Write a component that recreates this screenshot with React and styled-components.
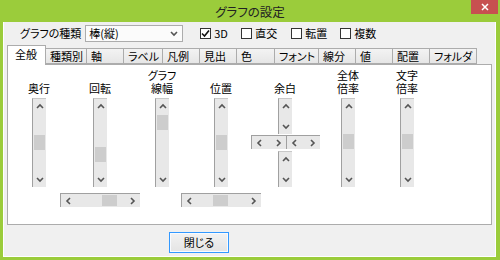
import React from 'react';
import styled, { createGlobalStyle } from 'styled-components';

const GlobalStyle = createGlobalStyle`
  html, body {
    margin: 0;
    padding: 0;
    background: #9bcc3b;
  }
  body {
    font-family: "Noto Sans CJK JP", "Noto Sans", sans-serif;
    font-size: 11px;
    color: #000;
    font-feature-settings: "palt";
  }
`;

const Window = styled.div`
  width: 500px;
  height: 260px;
  background: #9bcc3b;
  display: flex;
  flex-direction: column;
`;

const TitleBar = styled.div`
  height: 22px;
  flex: none;
  display: grid;
  grid-template-columns: 1fr auto 1fr;
`;

const Title = styled.div`
  grid-column: 2;
  font-size: 12.5px;
  line-height: 24px;
  color: #222;
`;

const CloseButton = styled.div`
  grid-column: 3;
  justify-self: end;
  align-self: start;
  width: 27px;
  height: 14px;
  margin-right: 2px;
  background: #c75050;
  display: flex;
  align-items: center;
  justify-content: center;
`;

const Client = styled.div`
  flex: 1;
  margin: 0 4px 3px 3px;
  background: #f0f0f0;
  border: 1px solid #fff;
  border-top: none;
  display: flex;
  flex-direction: column;
`;

const Toolbar = styled.div`
  height: 22px;
  display: flex;
  align-items: center;
  padding-left: 16px;
`;

const Label = styled.span`
  line-height: 13px;
  white-space: nowrap;
`;

const Select = styled.div`
  width: 98px;
  height: 17px;
  box-sizing: border-box;
  margin-left: 4px;
  margin-right: 17px;
  border: 1px solid #acacac;
  background: #fbfbfb;
  display: flex;
  align-items: center;
  justify-content: space-between;
  padding: 0 4px 0 3px;
`;

const Check = styled.label`
  width: ${p => (p.w ? p.w + 'px' : 'auto')};
  display: flex;
  align-items: center;
  gap: 3px;
`;

const Box = styled.span`
  width: 11px;
  height: 11px;
  box-sizing: border-box;
  border: 1px solid #333;
  background: #fff;
  display: flex;
  align-items: center;
  justify-content: center;
`;

const TabStrip = styled.div`
  height: 19px;
  margin: 1px 3px 0;
  display: flex;
  align-items: flex-end;
`;

const Tab = styled.div`
  width: ${p => p.w}px;
  height: ${p => (p.active ? 20 : 16)}px;
  margin-bottom: ${p => (p.active ? -1 : 0)}px;
  margin-left: -1px;
  box-sizing: border-box;
  border: 1px solid #acacac;
  border-bottom: ${p => (p.active ? 'none' : '1px solid #acacac')};
  background: ${p => (p.active ? '#fff' : 'linear-gradient(#f3f3f3, #e6e6e6)')};
  padding-left: ${p => (p.active ? 7 : 4)}px;
  line-height: ${p => (p.active ? 17 : 15)}px;
  white-space: nowrap;
  position: relative;
  z-index: ${p => (p.active ? 1 : 0)};
  &:first-child {
    margin-left: 0;
  }
`;

const Panel = styled.div`
  height: 161px;
  box-sizing: border-box;
  margin: 0 3px;
  border: 1px solid #acacac;
  background: #fff;
  display: grid;
  grid-template-columns: 62px 60px 64px 54px 74px 52px 66px;
  align-items: start;
  padding-top: 4px;
`;

const Column = styled.div`
  display: flex;
  flex-direction: column;
  align-items: center;
`;

const Caption = styled.div`
  height: 26px;
  margin-bottom: 3px;
  display: flex;
  flex-direction: column;
  justify-content: flex-end;
  align-items: center;
  line-height: 13px;
  white-space: nowrap;
`;

const VBar = styled.div`
  width: 14px;
  height: ${p => p.h}px;
  box-sizing: border-box;
  border-left: 1px solid #a0a0a0;
  border-top: 1px solid #c8c8c8;
  background: #e8e8e8;
  display: flex;
  flex-direction: column;
`;

const HBar = styled.div`
  width: ${p => p.w}px;
  height: 14px;
  box-sizing: border-box;
  border-left: 1px solid #a0a0a0;
  border-top: 1px solid #a0a0a0;
  background: #e8e8e8;
  display: flex;
  margin-top: ${p => p.mt || 0}px;
`;

const Arrow = styled.div`
  flex: none;
  ${p => (p.horizontal ? 'width: 15px;' : 'height: 15px;')}
  display: flex;
  align-items: center;
  justify-content: center;
`;

const Trough = styled.div`
  flex: 1;
  display: flex;
  flex-direction: ${p => (p.horizontal ? 'row' : 'column')};
`;

const Thumb = styled.div`
  flex: none;
  background: #cdcdcd;
  ${p =>
    p.horizontal
      ? 'width: 15px; margin: 1px 0 1px;'
      : 'height: 15px; margin: 0 1px 0 1px;'}
`;

const CrossRow = styled.div`
  display: flex;
  margin: 1px 0 2px;
`;

const Footer = styled.div`
  flex: 1;
  padding: 7px 0 0 165px;
`;

const Button = styled.div`
  width: 60px;
  height: 21px;
  box-sizing: border-box;
  border: 1px solid #3399ff;
  background: linear-gradient(#f2f2f2, #e4e4e4);
  box-shadow: inset 0 0 0 1px #f8fbff;
  display: flex;
  align-items: center;
  justify-content: center;
  line-height: 13px;
`;

const Chevron = ({ dir }) => {
  const pts = {
    up: '1,5 4,2 7,5',
    down: '1,2 4,5 7,2',
    left: '5,1 2,4 5,7',
    right: '2,1 5,4 2,7',
  }[dir];
  const vertical = dir === 'up' || dir === 'down';
  return (
    <svg width={vertical ? 8 : 7} height={vertical ? 7 : 8} viewBox={vertical ? '0 0 8 7' : '0 0 7 8'}>
      <polyline points={pts} fill="none" stroke="#555" strokeWidth="1.6" />
    </svg>
  );
};

const VScroll = ({ h = 89, thumb }) => (
  <VBar h={h}>
    <Arrow><Chevron dir="up" /></Arrow>
    <Trough>{thumb != null && <Thumb style={{ marginTop: thumb }} />}</Trough>
    <Arrow><Chevron dir="down" /></Arrow>
  </VBar>
);

const HScroll = ({ w = 80, thumb, mt }) => (
  <HBar w={w} mt={mt}>
    <Arrow horizontal><Chevron dir="left" /></Arrow>
    <Trough horizontal>{thumb != null && <Thumb horizontal style={{ marginLeft: thumb }} />}</Trough>
    <Arrow horizontal><Chevron dir="right" /></Arrow>
  </HBar>
);

const tabs = [
  ['全般', 39],
  ['種類別', 42],
  ['軸', 38],
  ['ラベル', 40],
  ['凡例', 38],
  ['見出', 38],
  ['色', 39],
  ['フォント', 45],
  ['線分', 38],
  ['値', 38],
  ['配置', 38],
  ['フォルダ', 48],
];

const controls = [
  { lines: ['奥行'], thumb: 21 },
  { lines: ['回転'], thumb: 33, h: 26 },
  { lines: ['グラフ', '線幅'], thumb: 1 },
  { lines: ['位置'], thumb: 21, h: 16 },
  { lines: ['余白'], cross: true },
  { lines: ['全体', '倍率'], thumb: 20 },
  { lines: ['文字', '倍率'], thumb: 20 },
];

const CheckBox = ({ label, checked, w }) => (
  <Check w={w}>
    <Box>
      {checked && (
        <svg width="9" height="9" viewBox="0 0 9 9">
          <polyline points="1,4.5 3.5,7 8,1.5" fill="none" stroke="#111" strokeWidth="1.6" />
        </svg>
      )}
    </Box>
    <Label>{label}</Label>
  </Check>
);

export default function App() {
  return (
    <>
      <GlobalStyle />
      <Window>
        <TitleBar>
          <Title>グラフの設定</Title>
          <CloseButton>
            <svg width="8" height="8" viewBox="0 0 8 8">
              <path d="M1 1L7 7M7 1L1 7" stroke="#fff" strokeWidth="1.5" />
            </svg>
          </CloseButton>
        </TitleBar>
        <Client>
          <Toolbar>
            <Label>グラフの種類</Label>
            <Select>
              <Label>棒(縦)</Label>
              <Chevron dir="down" />
            </Select>
            <CheckBox label="3D" checked w={41} />
            <CheckBox label="直交" w={50} />
            <CheckBox label="転置" w={49} />
            <CheckBox label="複数" />
          </Toolbar>
          <TabStrip>
            {tabs.map(([name, w], i) => (
              <Tab key={name} w={w} active={i === 0}>{name}</Tab>
            ))}
          </TabStrip>
          <Panel>
            {controls.map(c => (
              <Column key={c.lines.join('')}>
                <Caption>
                  {c.lines.map(l => <div key={l}>{l}</div>)}
                </Caption>
                {c.cross ? (
                  <>
                    <VScroll h={36} />
                    <CrossRow>
                      <HScroll w={35} />
                      <HScroll w={34} />
                    </CrossRow>
                    <VScroll h={36} />
                  </>
                ) : (
                  <>
                    <VScroll thumb={c.thumb} />
                    {c.h != null && <HScroll thumb={c.h} mt={6} />}
                  </>
                )}
              </Column>
            ))}
          </Panel>
          <Footer>
            <Button>閉じる</Button>
          </Footer>
        </Client>
      </Window>
    </>
  );
}
